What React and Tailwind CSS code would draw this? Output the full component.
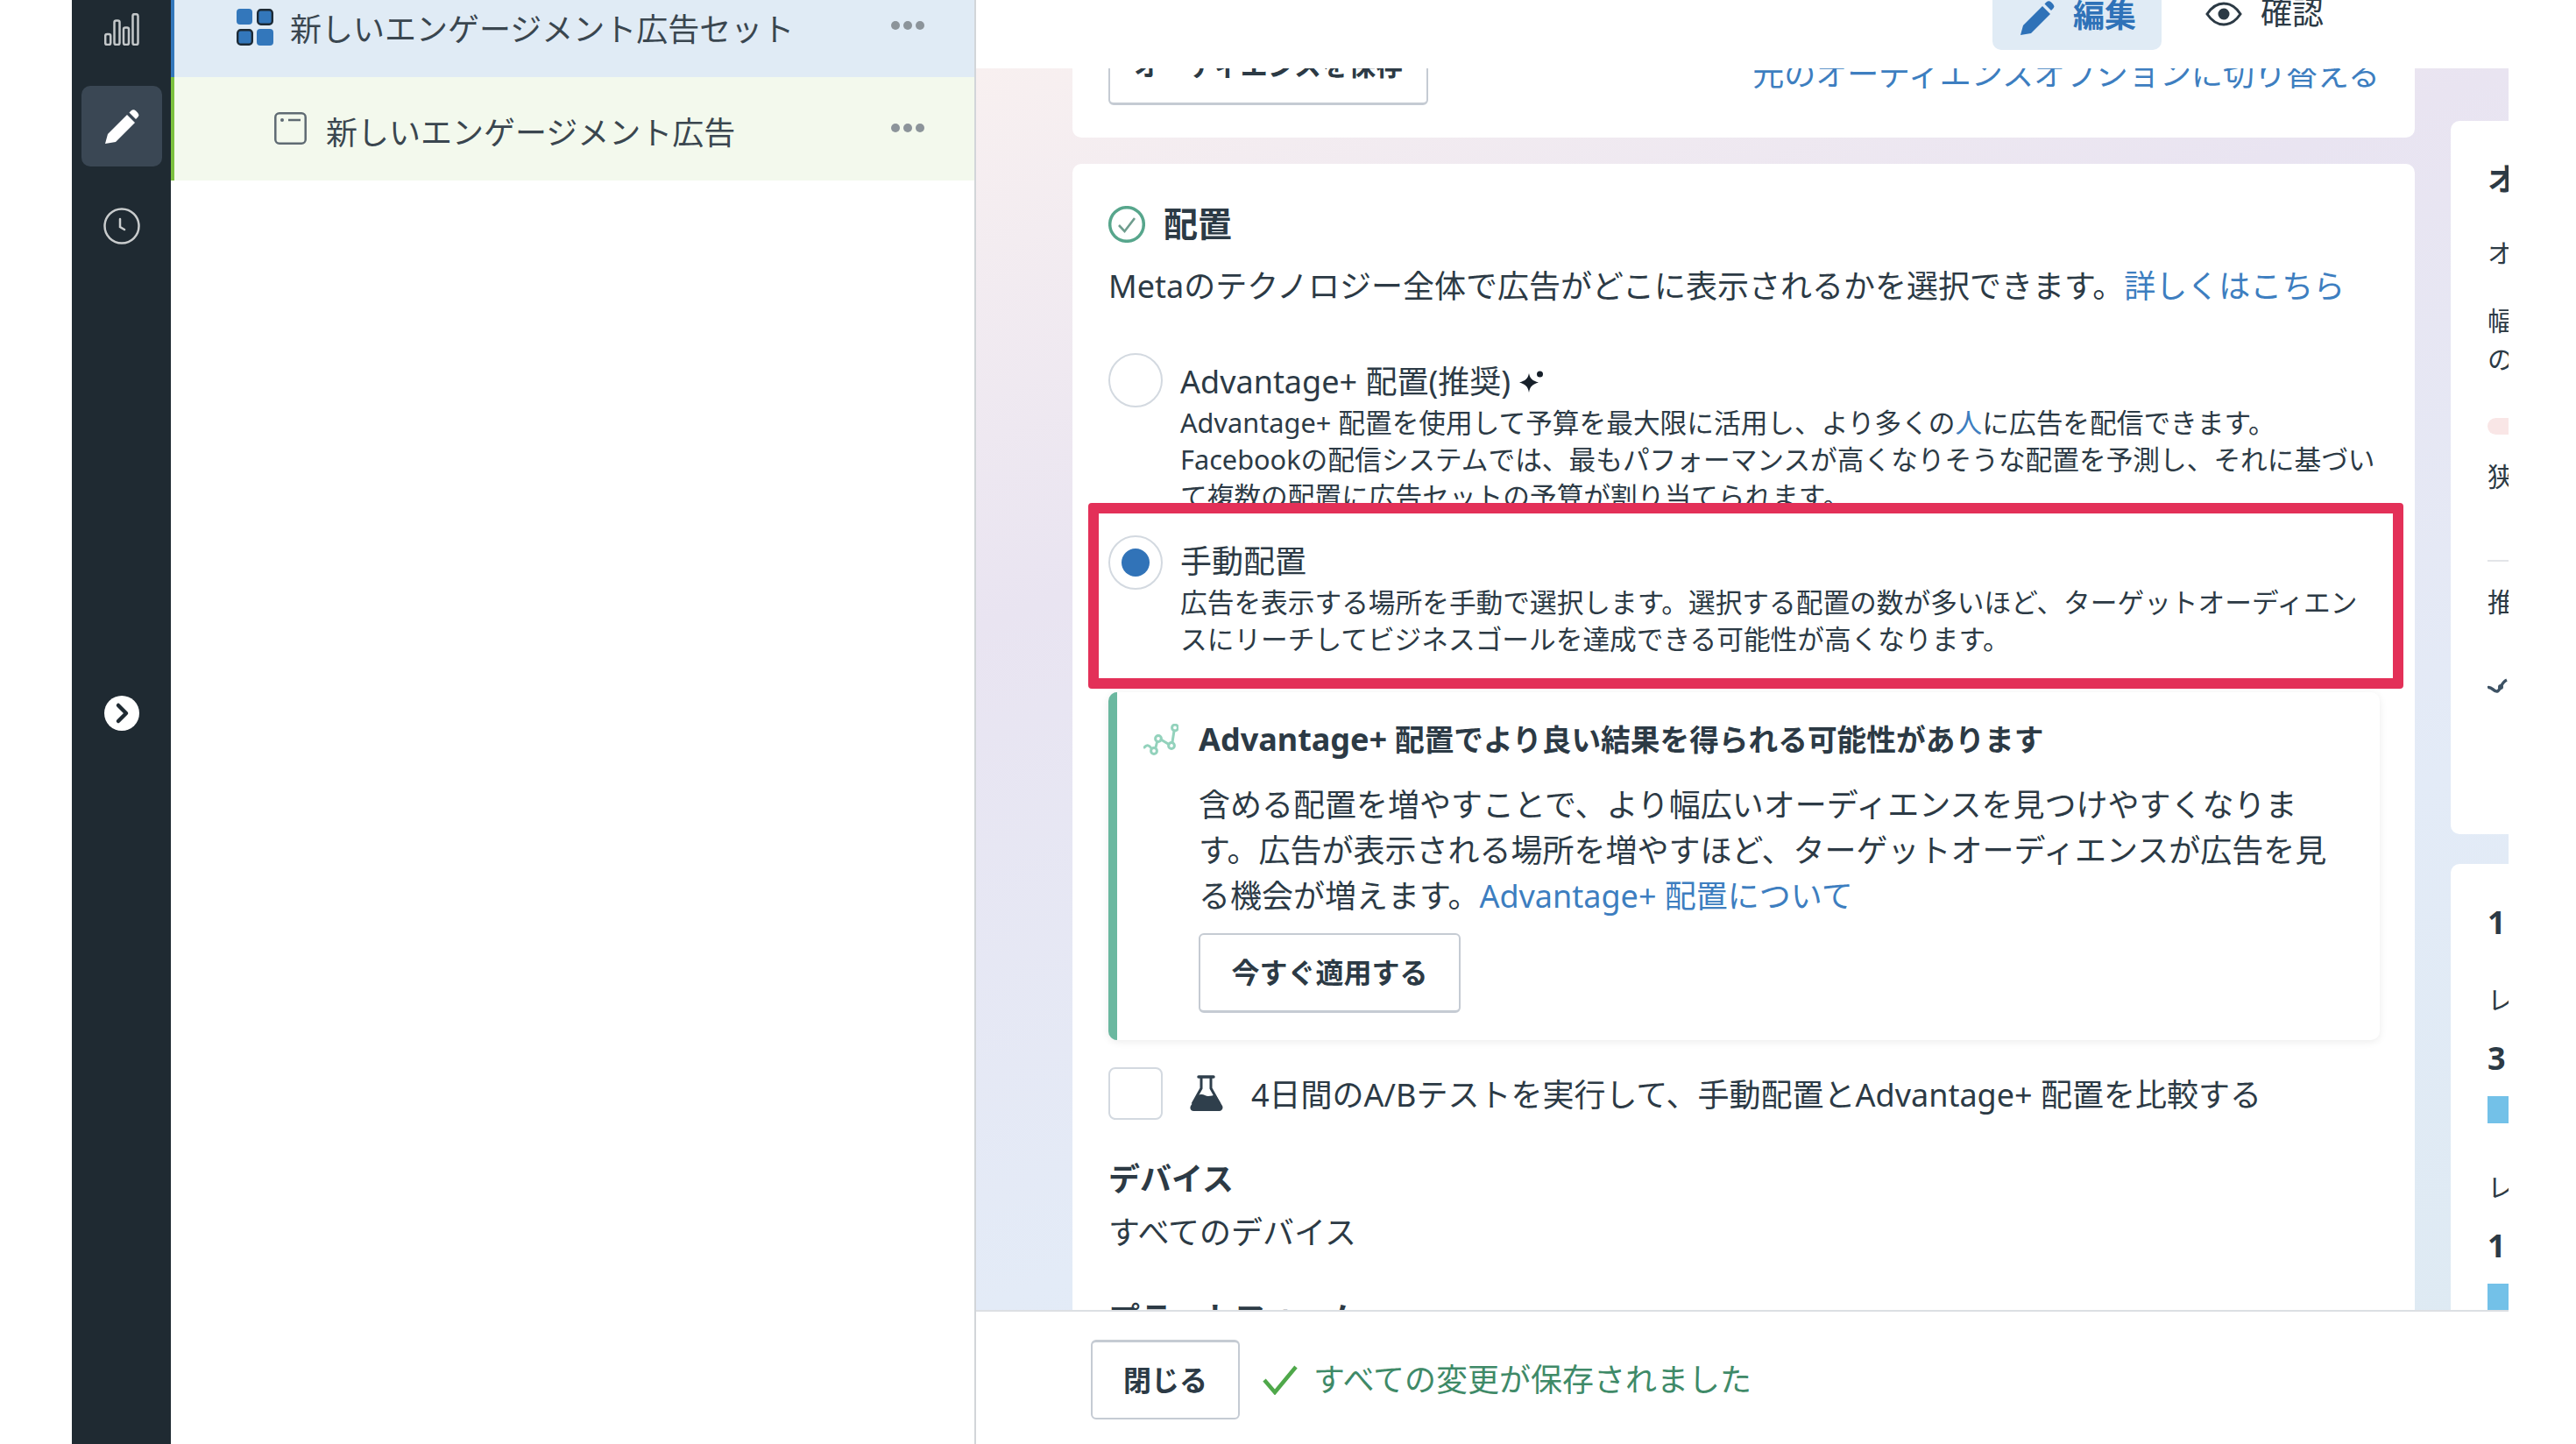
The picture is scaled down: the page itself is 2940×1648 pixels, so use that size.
import React from 'react'

const BarsIcon = () => (
    <svg width="40" height="37" viewBox="0 0 40 37" fill="none" stroke="#c3c7c9" strokeWidth="2.5">
        <rect x="1.2" y="24" width="6" height="12" rx="2" />
        <rect x="11.5" y="8.5" width="6" height="27.5" rx="2" />
        <rect x="22" y="16.5" width="6" height="19.5" rx="2" />
        <rect x="32.5" y="1.2" width="6" height="34.8" rx="2" />
    </svg>
)

const PencilIcon = ({ color, size }) => (
    <svg width={size} height={size} viewBox="0 0 40 40" fill={color}>
        <path d="M1 40l3-11L26 7l9 9-22 22-12 2z" />
        <path d="M28.5 4.5l2-2a4 4 0 0 1 5.5 0l2 2a4 4 0 0 1 0 5.5l-2 2z" />
    </svg>
)

const ClockIcon = () => (
    <svg width="42" height="42" viewBox="0 0 42 42" fill="none" stroke="#c9cccd" strokeWidth="2.5">
        <circle cx="21" cy="21" r="19.5" />
        <path d="M19 13v9l5 3" strokeLinecap="round" />
    </svg>
)

const ChevronCircle = () => (
    <svg width="40" height="40" viewBox="0 0 40 40">
        <circle cx="20" cy="20" r="20" fill="#ffffff" />
        <path d="M16 11l9 9-9 9" fill="none" stroke="#1f2a32" strokeWidth="4.5" strokeLinecap="round" strokeLinejoin="round" />
    </svg>
)

const AdSetIcon = () => (
    <svg width="42" height="42" viewBox="0 0 42 42">
        <rect x="0" y="0" width="18" height="18" rx="4" fill="#3377bb" />
        <rect x="24.2" y="1.2" width="16.6" height="16.6" rx="3.5" fill="#3377bb" stroke="#1d2a35" strokeWidth="2.4" />
        <rect x="1.2" y="24.2" width="16.6" height="16.6" rx="3.5" fill="#3377bb" stroke="#1d2a35" strokeWidth="2.4" />
        <rect x="23" y="23" width="19" height="19" rx="4" fill="#3377bb" />
    </svg>
)

const AdIcon = () => (
    <svg width="37" height="37" viewBox="0 0 37 37" fill="none" stroke="#5f6b73" strokeWidth="2.5">
        <rect x="1.3" y="1.3" width="34.4" height="34.4" rx="4.5" />
        <circle cx="9" cy="9" r="2" fill="#5f6b73" stroke="none" />
        <path d="M16 9h14" />
    </svg>
)

const CheckCircle = () => (
    <svg width="42" height="42" viewBox="0 0 42 42" fill="none">
        <circle cx="21" cy="21" r="19.3" stroke="#57a68c" strokeWidth="3.5" />
        <path d="M12 22l6.5 7L30 14" stroke="#6f9d8e" strokeWidth="2.6" />
    </svg>
)

const Sparkle = () => (
    <svg width="28" height="26" viewBox="0 0 28 26" fill="#17202a">
        <path d="M11 3c1.200 6 4 8.500 11 10.500-7 2-9.800 4.500-11 11.500-1.200-7-4-9.500-11-11.500 7-2 9.800-4.500 11-10.500z" />
        <circle cx="23.500" cy="4" r="3.500" />
    </svg>
)

const TrendIcon = () => (
    <svg width="40" height="36" viewBox="0 0 40 36" fill="none" stroke="#93d2bc" strokeWidth="3">
        <path d="M1 27c3-4 6-2 8 1M14 27l1.500-6M20 18l9 5.500M33 21l2-13" strokeLinecap="round" />
        <circle cx="12" cy="31" r="3.400" />
        <circle cx="17" cy="17" r="3.400" />
        <circle cx="32" cy="25" r="3.400" />
        <circle cx="36" cy="4.500" r="3.400" />
    </svg>
)

const FlaskIcon = () => (
    <svg width="38" height="42" viewBox="0 0 38 42" fill="none">
        <path d="M10 2h17" stroke="#2f3f4c" strokeWidth="3.500" strokeLinecap="round" />
        <path d="M13 2v13L3 33M24 2v13l10 18" stroke="#2f3f4c" strokeWidth="3" />
        <path d="M9 23c6-3 8 1 12 1 3 0 6-1 8-2l8 13c1.500 3-.5 6-3.500 6H4.500C1 41-.5 38 1 35z" fill="#2f3f4c" />
    </svg>
)

const TinyGreenCheck = () => (
    <svg width="40" height="34" viewBox="0 0 40 34" fill="none">
        <path d="M2 17l12 14L38 2" stroke="#4fa84a" strokeWidth="4.500" />
    </svg>
)

const Dots = () => (
    <div className="flex gap-[4px]">
        <span className="w-[10px] h-[10px] rounded-full bg-[#8c949a]" />
        <span className="w-[10px] h-[10px] rounded-full bg-[#8c949a]" />
        <span className="w-[10px] h-[10px] rounded-full bg-[#8c949a]" />
    </div>
)

const App = () => {
    return (
        <div className="flex w-[2940px] h-[1648px] overflow-hidden bg-white text-[#2c3a45] font-['Noto_Sans','Noto_Sans_CJK_JP',sans-serif]">
            <div className="w-[82px] shrink-0" />

            {/* Left rail */}
            <div className="w-[113px] shrink-0 bg-[#1f2a32] flex flex-col items-center">
                <div className="mt-[15px]"><BarsIcon /></div>
                <div className="mt-[46px] w-[92px] h-[92px] rounded-[10px] bg-[#3a4754] flex items-center justify-center">
                    <PencilIcon color="#ffffff" size={40} />
                </div>
                <div className="mt-[47px]"><ClockIcon /></div>
                <div className="mt-[515px]"><ChevronCircle /></div>
            </div>

            {/* Campaign tree */}
            <div className="w-[919px] shrink-0 border-r-2 border-[#d2d5d9]">
                <div className="h-[88px] bg-[#e0ebf5] border-l-[4px] border-[#3377bb] flex items-start pl-[71px] pr-[57px]">
                    <div className="mt-[10px]"><AdSetIcon /></div>
                    <span className="ml-[19px] text-[36px] leading-[50px] mt-[9px] text-[#3a464f] flex-1">新しいエンゲージメント広告セット</span>
                    <div className="mt-[24px]"><Dots /></div>
                </div>
                <div className="h-[118px] bg-[#f3f9ed] border-l-[4px] border-[#7cc13f] flex items-start pl-[114px] pr-[57px]">
                    <div className="mt-[40px]"><AdIcon /></div>
                    <span className="ml-[22px] text-[36px] leading-[50px] mt-[39px] text-[#3a464f] flex-1">新しいエンゲージメント広告</span>
                    <div className="mt-[53px]"><Dots /></div>
                </div>
            </div>

            {/* Main column */}
            <div className="w-[1749px] shrink-0 flex flex-col">
                <div className="h-[78px] shrink-0 bg-white flex items-start pl-[1160px]">
                    <div className="w-[193px] h-[57px] rounded-b-[10px] bg-[#e0ebf5] flex items-start pl-[31px]">
                        <PencilIcon color="#2f72b8" size={40} />
                        <span className="ml-[21px] -mt-[4px] text-[36px] leading-[44px] font-semibold text-[#2f72b8]">編集</span>
                    </div>
                    <div className="ml-[50px] mt-[2px]">
                        <svg width="42" height="28" viewBox="0 0 42 28" fill="none">
                            <path d="M2 14C8 5 14 2 21 2s13 3 19 12c-6 9-12 12-19 12S8 23 2 14z" stroke="#2c3a45" strokeWidth="3" />
                            <circle cx="21" cy="14" r="6.500" fill="#2c3a45" />
                        </svg>
                    </div>
                    <span className="ml-[21px] -mt-[7px] text-[36px] leading-[44px] text-[#2c3a45]">確認</span>
                </div>

                <div className="h-[1417px] shrink-0 flex overflow-hidden pl-[110px] bg-[linear-gradient(160deg,#f8f0f0_0%,#e9e4f1_31%,#e3ebf7_69%,#deeaf3_100%)]">
                    <div className="w-[1532px] shrink-0 flex flex-col">
                        <div className="h-[79px] shrink-0 bg-white rounded-b-[10px] overflow-hidden flex items-end justify-between pl-[41px] pr-[40px] pb-[37px]">
                            <div className="w-[365px] h-[90px] shrink-0 bg-white border-2 border-b-[3px] border-[#c5cbd3] rounded-[6px] flex items-center justify-center text-[31px] font-semibold">オーディエンスを保存</div>
                            <span className="text-[36px] leading-[50px] text-[#3d7ec0] mb-[10px]">元のオーディエンスオプションに切り替える</span>
                        </div>

                        <div className="mt-[30px] flex-1 bg-white rounded-t-[10px] overflow-hidden pt-[48px] pl-[41px] pr-[40px]">
                            <div className="flex items-center">
                                <CheckCircle />
                                <span className="ml-[21px] text-[39px] leading-[42px] -mt-[3px] font-bold">配置</span>
                            </div>
                            <p className="mt-[24px] text-[36px] leading-[52px]">
                                Metaのテクノロジー全体で広告がどこに表示されるかを選択できます。<span className="text-[#3d7ec0]">詳しくはこちら</span>
                            </p>

                            <div className="mt-[50px] flex items-start">
                                <div className="w-[62px] h-[62px] shrink-0 rounded-full border-2 border-[#d3d9e0]" />
                                <div className="ml-[20px] pt-[8px]">
                                    <div className="flex items-center text-[36px] leading-[50px]">
                                        Advantage+ 配置(推奨)
                                        <span className="ml-[10px]"><Sparkle /></span>
                                    </div>
                                    <p className="text-[30.7px] leading-[42px]">
                                        Advantage+ 配置を使用して予算を最大限に活用し、より多くの<span className="text-[#3d7ec0]">人</span>に広告を配信できます。<br />
                                        Facebookの配信システムでは、最もパフォーマンスが高くなりそうな配置を予測し、それに基づい<br />
                                        て複数の配置に広告セットの予算が割り当てられます。
                                    </p>
                                </div>
                            </div>

                            <div className="relative mt-[24px] flex items-start">
                                <div className="absolute -left-[23px] -right-[27px] -top-[37px] h-[212px] border-[12px] border-[#e33058] rounded-[4px]" />
                                <div className="w-[62px] h-[62px] shrink-0 rounded-full border-2 border-[#d3d9e0] flex items-center justify-center">
                                    <span className="w-[32px] h-[32px] rounded-full bg-[#3173b8]" />
                                </div>
                                <div className="ml-[20px] pt-[5px]">
                                    <div className="text-[36px] leading-[50px]">手動配置</div>
                                    <p className="text-[30.7px] leading-[42px]">
                                        広告を表示する場所を手動で選択します。選択する配置の数が多いほど、ターゲットオーディエン<br />
                                        スにリーチしてビジネスゴールを達成できる可能性が高くなります。
                                    </p>
                                </div>
                            </div>

                            <div className="mt-[40px] h-[397px] rounded-[10px] border-l-[10px] border-[#6bb8a0] bg-white shadow-[0_2px_10px_rgba(0,0,0,0.08)] pl-[30px] pt-[28px]">
                                <div className="flex items-start">
                                    <div className="mt-[8px]"><TrendIcon /></div>
                                    <span className="ml-[23px] text-[33.7px] leading-[52px] font-bold"><span className="text-[36px]">Advantage+</span> 配置でより良い結果を得られる可能性があります</span>
                                </div>
                                <p className="ml-[63px] mt-[23px] text-[36px] leading-[52px]">
                                    含める配置を増やすことで、より幅広いオーディエンスを見つけやすくなりま<br />
                                    す。広告が表示される場所を増やすほど、ターゲットオーディエンスが広告を見<br />
                                    る機会が増えます。<span className="text-[#3d7ec0]">Advantage+ 配置について</span>
                                </p>
                                <div className="ml-[63px] mt-[16px] w-[299px] h-[91px] bg-white border-2 border-b-[3px] border-[#c5cbd3] rounded-[6px] flex items-center justify-center text-[32px] font-semibold">今すぐ適用する</div>
                            </div>

                            <div className="mt-[31px] flex items-center">
                                <div className="w-[62px] h-[60px] shrink-0 rounded-[8px] border-2 border-[#d3d9e0]" />
                                <span className="ml-[31px]"><FlaskIcon /></span>
                                <span className="ml-[32px] mt-[4px] text-[36px] leading-[52px]">4日間のA/Bテストを実行して、手動配置とAdvantage+ 配置を比較する</span>
                            </div>

                            <div className="mt-[42px] text-[36px] leading-[52px] font-bold">デバイス</div>
                            <div className="mt-[9px] text-[36px] leading-[52px]">すべてのデバイス</div>
                            <div className="mt-[46px] text-[36px] leading-[52px] font-bold">プラットフォーム</div>
                        </div>
                    </div>

                    {/* Right summary column, cut off by the window edge */}
                    <div className="ml-[41px] w-[66px] shrink-0 flex flex-col pt-[60px]">
                        <div className="h-[814px] shrink-0 bg-white rounded-l-[10px] overflow-hidden pl-[42px] pt-[45px] text-[30px] leading-[44px]">
                            <div className="font-bold text-[36px]">オ</div>
                            <div className="mt-[40px]">オ</div>
                            <div className="mt-[33px]">幅</div>
                            <div>の</div>
                            <div className="mt-[45px] h-[19px] rounded-l-full bg-[#f9e6e6]" />
                            <div className="mt-[26px]">狭</div>
                            <div className="mt-[73px] h-[2px] bg-[#e3e5e8]" />
                            <div className="mt-[24px]">推</div>
                            <svg className="mt-[60px]" width="24" height="26" viewBox="0 0 24 26" fill="none" stroke="#3d5264" strokeWidth="3.500">
                                <path d="M0 16c4-3 7 5 11 4s4-10 11-13" />
                                <circle cx="15" cy="15" r="3" fill="#3d5264" stroke="none" />
                            </svg>
                        </div>
                        <div className="mt-[34px] flex-1 bg-white rounded-tl-[10px] overflow-hidden pl-[42px] pt-[45px] text-[30px] leading-[44px]">
                            <div className="font-bold text-[36px]">1</div>
                            <div className="mt-[44px]">レ</div>
                            <div className="mt-[23px] font-bold text-[36px]">3</div>
                            <div className="mt-[21px] h-[31px] bg-[#73c1e8]" />
                            <div className="mt-[51px]">レ</div>
                            <div className="mt-[23px] font-bold text-[36px]">1</div>
                            <div className="mt-[21px] h-[31px] bg-[#73c1e8]" />
                        </div>
                    </div>
                </div>

                <div className="flex-1 border-t-2 border-[#dcdfe3] bg-white flex items-center pl-[131px] pt-[4px]">
                    <div className="w-[170px] h-[91px] bg-white border-2 border-t-[3px] border-[#c5cbd3] rounded-[6px] flex items-center justify-center text-[32px] font-semibold">閉じる</div>
                    <span className="ml-[26px]"><TinyGreenCheck /></span>
                    <span className="ml-[18px] text-[36px] leading-[50px] text-[#3f8a68]">すべての変更が保存されました</span>
                </div>
            </div>
        </div>
    )
}

export default App
